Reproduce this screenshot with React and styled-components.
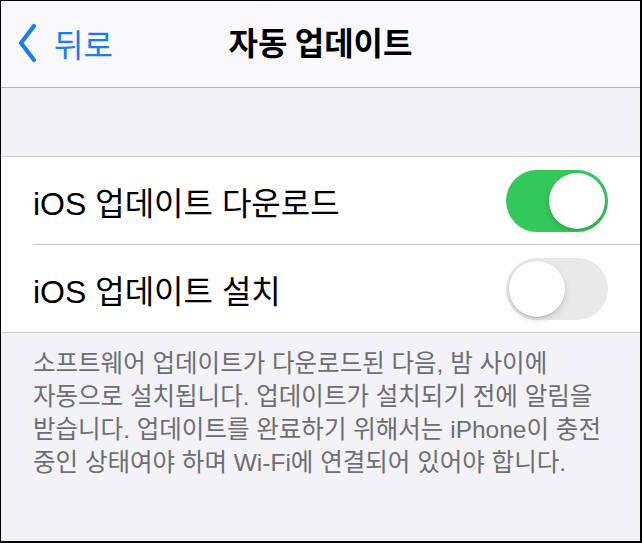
import React, { useState } from "react";
import styled, { createGlobalStyle } from "styled-components";

const GlobalStyle = createGlobalStyle`
  html, body {
    margin: 0;
    padding: 0;
  }
  body {
    font-family: "Liberation Sans", "Noto Sans CJK KR", sans-serif;
    -webkit-font-smoothing: antialiased;
  }
`;

const Screen = styled.div`
  box-sizing: border-box;
  width: 642px;
  height: 543px;
  border-style: solid;
  border-color: #000;
  border-width: 1px 2px 2px 1px;
  background-color: #f2f2f7;
  display: flex;
  flex-direction: column;
  overflow: hidden;
`;

const NavBar = styled.div`
  height: 86px;
  flex-shrink: 0;
  background-color: #f9f9fb;
  border-bottom: 1px solid #b2b2b6;
  display: flex;
  align-items: center;
  position: relative;
`;

const BackButton = styled.button`
  display: flex;
  align-items: center;
  gap: 16px;
  background: none;
  border: none;
  padding: 0 0 0 17px;
  margin-top: -2px;
  color: #1a7cf5;
  font-family: "Noto Sans CJK KR", sans-serif;
  font-size: 32px;
  cursor: pointer;
`;

const Title = styled.h1`
  position: absolute;
  left: 0;
  right: 0;
  top: 17px;
  margin: 0;
  text-align: center;
  font-family: "Noto Sans CJK KR", sans-serif;
  font-size: 32px;
  font-weight: 700;
  color: #000;
  pointer-events: none;
`;

const Spacer = styled.div`
  height: 68px;
  flex-shrink: 0;
`;

const Group = styled.div`
  background-color: #fff;
  border-top: 1px solid #c8c7cc;
  border-bottom: 1px solid #c8c7cc;
`;

const Row = styled.div`
  height: 87px;
  display: flex;
  align-items: center;
  justify-content: space-between;
  padding: 0 32px 0 32px;

  & + & {
    border-top: 1px solid #c8c7cc;
    margin-left: 32px;
    padding-left: 0;
  }
`;

const Label = styled.span`
  font-size: 32px;
  color: #000;
`;

const Track = styled.button`
  width: 102px;
  height: 62px;
  border-radius: 31px;
  border: none;
  padding: 0;
  position: relative;
  cursor: pointer;
  background-color: ${(p) => (p.$on ? "#34c759" : "#e9e9ea")};
  transition: background-color 0.2s;
`;

const Knob = styled.span`
  position: absolute;
  top: 3px;
  left: ${(p) => (p.$on ? "43px" : "3px")};
  width: 56px;
  height: 56px;
  border-radius: 50%;
  background-color: #fff;
  box-shadow: 0 3px 6px rgba(0, 0, 0, 0.15), 0 1px 1px rgba(0, 0, 0, 0.12);
  transition: left 0.2s;
`;

const Footer = styled.p`
  margin: 0;
  padding: 14px 32px 0 32px;
  font-size: 24.5px;
  line-height: 33px;
  color: #6d6d72;
  white-space: nowrap;
`;

const Toggle = ({ on, onChange }) => (
  <Track $on={on} onClick={onChange} aria-pressed={on}>
    <Knob $on={on} />
  </Track>
);

const Chevron = () => (
  <svg width="20" height="40" viewBox="0 0 20 40">
    <path
      d="M16 3 L3 20 L16 37"
      fill="none"
      stroke="#1a7cf5"
      strokeWidth="4.2"
      strokeLinecap="round"
      strokeLinejoin="round"
    />
  </svg>
);

const App = () => {
  const [download, setDownload] = useState(true);
  const [install, setInstall] = useState(false);

  return (
    <>
      <GlobalStyle />
      <Screen>
        <NavBar>
          <BackButton>
            <Chevron />
            뒤로
          </BackButton>
          <Title>자동 업데이트</Title>
        </NavBar>
        <Spacer />
        <Group>
          <Row>
            <Label>iOS 업데이트 다운로드</Label>
            <Toggle on={download} onChange={() => setDownload(!download)} />
          </Row>
          <Row>
            <Label>iOS 업데이트 설치</Label>
            <Toggle on={install} onChange={() => setInstall(!install)} />
          </Row>
        </Group>
        <Footer>
          소프트웨어 업데이트가 다운로드된 다음, 밤 사이에
          <br />
          자동으로 설치됩니다. 업데이트가 설치되기 전에 알림을
          <br />
          받습니다. 업데이트를 완료하기 위해서는 iPhone이 충전
          <br />
          중인 상태여야 하며 Wi-Fi에 연결되어 있어야 합니다.
        </Footer>
      </Screen>
    </>
  );
};

export default App;
